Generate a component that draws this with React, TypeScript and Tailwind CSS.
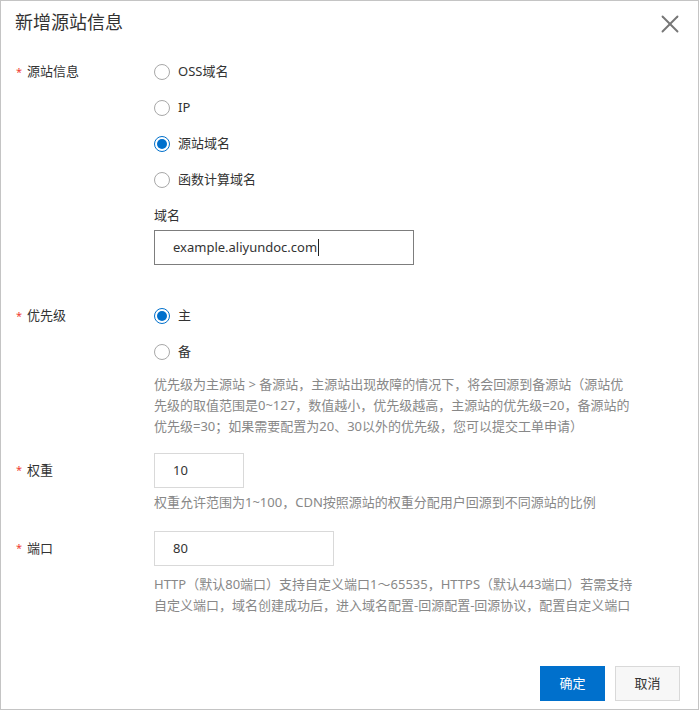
import { X } from "lucide-react";

function Radio({ label, checked }: { label: string; checked?: boolean }) {
  return (
    <div className="flex h-9 items-center">
      <span
        className={`flex h-4 w-4 items-center justify-center rounded-full border bg-white ${
          checked ? "border-[#0070cc]" : "border-[#a8a8a8]"
        }`}
      >
        {checked && <span className="h-[10px] w-[10px] rounded-full bg-[#0070cc]" />}
      </span>
      <span className="ml-2 text-[13px] text-[#333]">{label}</span>
    </div>
  );
}

function Label({ text }: { text: string }) {
  return (
    <div className="flex h-9 w-[138px] shrink-0 items-center text-[13px] text-[#333]">
      <span className="mr-[5px] text-[11px] text-[#f04134]">*</span>
      {text}
    </div>
  );
}

function Help({ children }: { children: React.ReactNode }) {
  return <p className="whitespace-nowrap text-[13px] leading-[21px] text-[#888]">{children}</p>;
}

export default function App() {
  return (
    <div
      className="flex h-[710px] w-[699px] flex-col border border-[#c4c4c4] bg-white"
      style={{ fontFamily: '"Segoe UI", "Noto Sans", "Noto Sans CJK SC", sans-serif' }}
    >
      {/* Header */}
      <div className="flex h-[53px] items-start justify-between pl-[14px] pr-[13px] pt-[9px]">
        <h1 className="text-[18px] leading-6 text-[#333]">新增源站信息</h1>
        <X className="-mt-px h-[30px] w-[30px] text-[#777]" strokeWidth={1.5} />
      </div>

      {/* Form */}
      <div className="flex-1 pl-[15px] pr-4">
        <div className="flex">
          <Label text="源站信息" />
          <div>
            <Radio label="OSS域名" />
            <Radio label="IP" />
            <Radio label="源站域名" checked />
            <Radio label="函数计算域名" />
            <div className="mt-[7px] text-[13px] leading-5 text-[#333]">域名</div>
            <div className="mt-[5px] flex h-[35px] w-[260px] items-center border border-[#7d7d7d] px-[18px] text-[13px] text-[#333]">
              example.aliyundoc.com
              <span className="ml-px h-[17px] w-px bg-[#222]" />
            </div>
          </div>
        </div>

        <div className="mt-[33px] flex">
          <Label text="优先级" />
          <div>
            <Radio label="主" checked />
            <Radio label="备" />
            <div className="mt-[4px]">
              <Help>
                优先级为主源站 &gt; 备源站，主源站出现故障的情况下，将会回源到备源站（源站优
                <br />
                先级的取值范围是0~127，数值越小，优先级越高，主源站的优先级=20，备源站的
                <br />
                优先级=30；如果需要配置为20、30以外的优先级，您可以提交工单申请）
              </Help>
            </div>
          </div>
        </div>

        <div className="mt-[16px] flex">
          <div className="flex h-[35px] items-center">
            <Label text="权重" />
          </div>
          <div>
            <div className="flex h-[35px] w-[90px] items-center border border-[#d9d9d9] px-[18px] text-[13px] text-[#333]">
              10
            </div>
            <div className="mt-[4px]">
              <Help>权重允许范围为1~100，CDN按照源站的权重分配用户回源到不同源站的比例</Help>
            </div>
          </div>
        </div>

        <div className="mt-[18px] flex">
          <div className="flex h-[35px] items-center">
            <Label text="端口" />
          </div>
          <div>
            <div className="flex h-[35px] w-[180px] items-center border border-[#d9d9d9] px-[18px] text-[13px] text-[#333]">
              80
            </div>
            <div className="mt-[8px]">
              <Help>
                HTTP（默认80端口）支持自定义端口1～65535，HTTPS（默认443端口）若需支持
                <br />
                自定义端口，域名创建成功后，进入域名配置-回源配置-回源协议，配置自定义端口
              </Help>
            </div>
          </div>
        </div>
      </div>

      {/* Footer */}
      <div className="flex justify-end gap-[10px] pb-[8px] pr-[18px]">
        <button className="h-[35px] w-[65px] bg-[#0070cc] text-[13px] text-white">确定</button>
        <button className="h-[35px] w-[65px] border border-[#d9d9d9] bg-[#f7f7f7] text-[13px] text-[#333]">
          取消
        </button>
      </div>
    </div>
  );
}
